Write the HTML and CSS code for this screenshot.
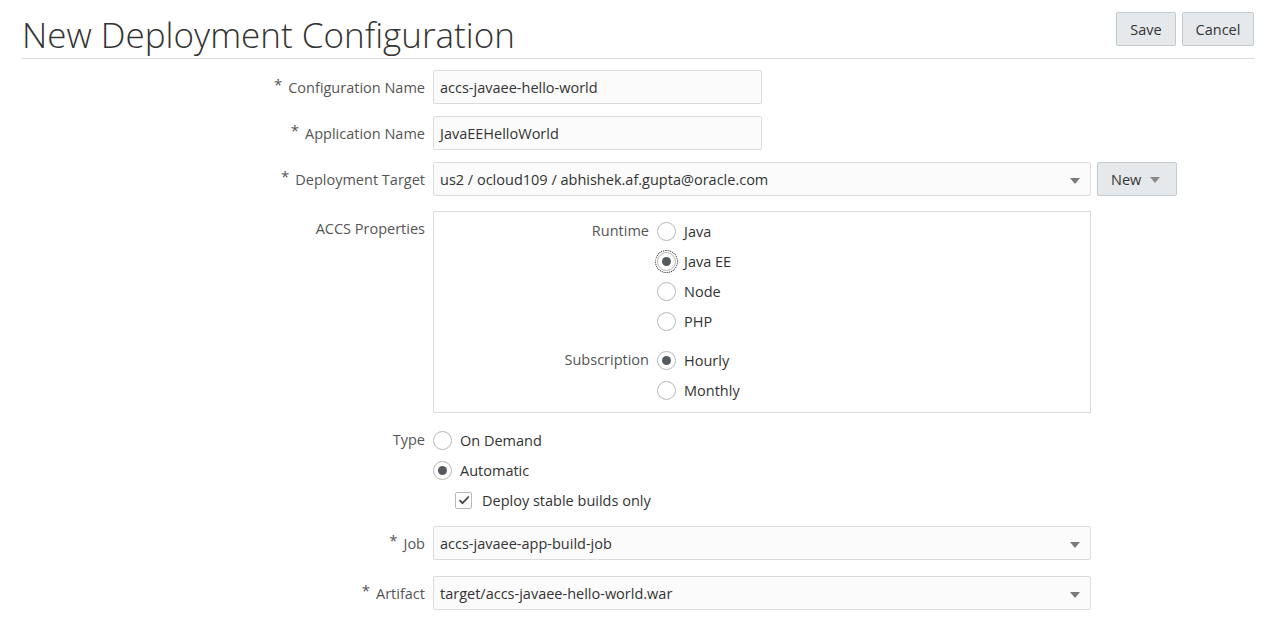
FILE: index.html
```html
<!DOCTYPE html>
<html>
<head>
<meta charset="utf-8">
<link rel="stylesheet" href="styles.css">
</head>
<body>
<div class="page">
  <header class="header">
    <h1 class="title">New Deployment Configuration</h1>
    <div class="actions">
      <button class="btn btn-save">Save</button>
      <button class="btn btn-cancel">Cancel</button>
    </div>
  </header>

  <div class="form">
    <div class="row r-cfg">
      <label class="lbl"><span class="req">*</span>Configuration Name</label>
      <div class="input short">accs-javaee-hello-world</div>
    </div>
    <div class="row r-app">
      <label class="lbl"><span class="req">*</span>Application Name</label>
      <div class="input short">JavaEEHelloWorld</div>
    </div>
    <div class="row r-target">
      <label class="lbl"><span class="req">*</span>Deployment Target</label>
      <div class="field-with-btn">
        <div class="input select wide">us2 / ocloud109 / abhishek.af.gupta@oracle.com<span class="caret"></span></div>
        <button class="btn btn-new">New<span class="caret small"></span></button>
      </div>
    </div>
    <div class="row r-accs">
      <label class="lbl lbl-top">ACCS Properties</label>
      <div class="box">
        <div class="sub">
          <div class="sublbl">Runtime</div>
          <div class="opts">
            <div class="opt"><span class="radio"></span>Java</div>
            <div class="opt"><span class="radio on focus"></span>Java EE</div>
            <div class="opt"><span class="radio"></span>Node</div>
            <div class="opt"><span class="radio"></span>PHP</div>
          </div>
        </div>
        <div class="sub sub2">
          <div class="sublbl">Subscription</div>
          <div class="opts">
            <div class="opt"><span class="radio on"></span>Hourly</div>
            <div class="opt"><span class="radio"></span>Monthly</div>
          </div>
        </div>
      </div>
    </div>
    <div class="row r-type">
      <label class="lbl lbl-type">Type</label>
      <div class="opts">
        <div class="opt"><span class="radio"></span>On Demand</div>
        <div class="opt"><span class="radio on"></span>Automatic</div>
        <div class="opt chk-opt"><span class="check"><svg width="12" height="10" viewBox="0 0 12 10"><path d="M1.5 5.2 L4.5 8.2 L10.8 1.5" fill="none" stroke="#444" stroke-width="1.7"/></svg></span>Deploy stable builds only</div>
      </div>
    </div>
    <div class="row r-job">
      <label class="lbl"><span class="req">*</span>Job</label>
      <div class="input select wide">accs-javaee-app-build-job<span class="caret"></span></div>
    </div>
    <div class="row r-art">
      <label class="lbl"><span class="req">*</span>Artifact</label>
      <div class="input select wide">target/accs-javaee-hello-world.war<span class="caret"></span></div>
    </div>
  </div>
</div>
</body>
</html>
```

FILE: styles.css
```css
* { box-sizing: border-box; }
html, body { margin: 0; padding: 0; background: #fff; }
body {
  font-family: "Open Sans", "Segoe UI", "Liberation Sans", sans-serif;
  font-size: 14.5px;
  color: #333;
}
.page { padding: 0 20px 0 22px; width: 1275px; }

.header {
  display: flex;
  justify-content: space-between;
  align-items: flex-start;
  border-bottom: 1px solid #dcdcdc;
  height: 59px;
}
.title {
  margin: 13px 0 0 0;
  font-weight: 300;
  font-size: 35px;
  line-height: 44px;
  color: #333;
  letter-spacing: 0;
}
.actions { display: flex; gap: 6px; margin-top: 12px; margin-right: 1px; }
.btn {
  font-family: inherit;
  font-size: 14.5px;
  color: #333;
  background: #e6e9eb;
  border: 1px solid #c3cbd1;
  border-radius: 2px;
  height: 34px;
  padding: 0 12px;
  cursor: pointer;
}
.btn-save { width: 60px; padding: 0; }
.btn-cancel { width: 72px; padding: 0; }

.form { display: flex; flex-direction: column; }
.row {
  display: grid;
  grid-template-columns: 403px 1fr;
  column-gap: 8px;
  align-items: center;
}
.r-cfg { margin-top: 11px; }
.r-app, .r-target { margin-top: 12px; }
.r-accs { margin-top: 15px; align-items: start; }
.r-type { margin-top: 17px; align-items: start; }
.r-job { margin-top: 16px; }
.r-art { margin-top: 16px; }

.lbl {
  text-align: right;
  color: #555;
  white-space: nowrap;
}
.req { color: #555; margin-right: 6px; font-size: 15px; position: relative; top: -3px; }
.lbl-top { padding-top: 8px; }
.lbl-type { line-height: 18px; padding-top: 1px; }

.input {
  height: 34px;
  border: 1px solid #dcdcdc;
  border-radius: 2px;
  background: #fbfbfb;
  display: flex;
  align-items: center;
  padding: 0 6px;
  color: #333;
  position: relative;
}
.short { width: 329px; }
.wide { width: 658px; }
.caret {
  position: absolute;
  right: 10px;
  top: 15px;
  width: 0; height: 0;
  border-left: 5px solid transparent;
  border-right: 5px solid transparent;
  border-top: 6px solid #7a7a7a;
}
.field-with-btn { display: flex; gap: 6px; align-items: center; }
.btn-new { position: relative; width: 80px; text-align: left; padding-left: 13px; height: 34px; }
.caret.small { right: 16px; top: 14px; border-top-color: #8a8a8a; }

.box {
  width: 658px;
  height: 202px;
  border: 1px solid #dcdcdc;
  padding-top: 9px;
}
.sub { display: grid; grid-template-columns: 215px 1fr; column-gap: 8px; }
.sub2 { margin-top: 19px; }
.sublbl { text-align: right; color: #555; line-height: 20px; }
.opts { display: flex; flex-direction: column; gap: 10px; }
.opt { display: flex; align-items: center; height: 20px; color: #333; }
.radio {
  width: 19px; height: 19px;
  border: 1px solid #b8b8b8;
  border-radius: 50%;
  background: #fff;
  margin-right: 8px;
  position: relative;
  flex: none;
}
.radio.on::after {
  content: "";
  position: absolute;
  left: 4px; top: 4px;
  width: 9px; height: 9px;
  border-radius: 50%;
  background: #555a60;
}
.radio.focus { outline: 1px dotted #222; outline-offset: 1px; }
.chk-opt { padding-left: 22px; }
.check {
  width: 17px; height: 17px;
  border: 1px solid #b8b8b8;
  border-radius: 2px;
  background: #fff;
  margin-right: 10px;
  display: flex; align-items: center; justify-content: center;
  flex: none;
}
```
